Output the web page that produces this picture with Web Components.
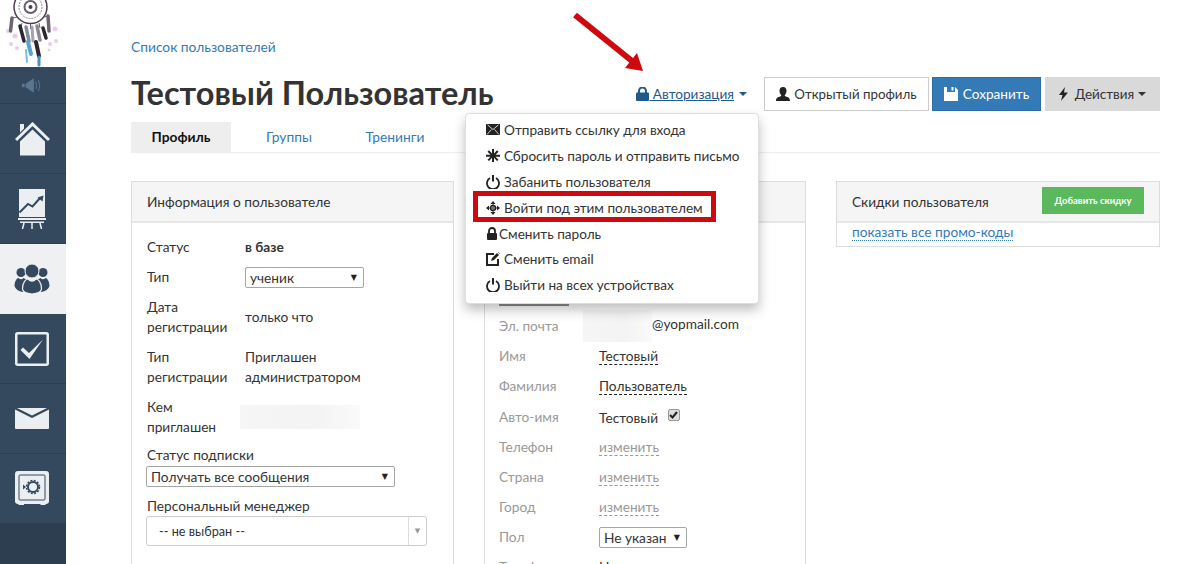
<!DOCTYPE html>
<html lang="ru">
<head>
<meta charset="utf-8">
<title>Тестовый Пользователь</title>
<style>
    html, body { margin: 0; height: 100%; overflow: hidden; background: #fff; }
    body { font: 13.7px/20px Lato, "Open Sans", sans-serif; color: #333; }
</style>
</head>
<body>
<app-shell>
    <side-nav slot="nav"></side-nav>
    <page-head></page-head>
    <page-tabs></page-tabs>
    <div style="display:grid;grid-template-columns:323px 322px 324px;column-gap:30px;margin-top:28px;align-items:start">
        <info-panel title="Информация о пользователе" style="--body-top:9px;--body-left:14px">
            <kv-row label="Статус"><b>в базе</b></kv-row>
            <kv-row label="Тип"><fake-select width="119px" h="21px">ученик</fake-select></kv-row>
            <kv-row label="Дата регистрации" style="--row-h:50px">только что</kv-row>
            <kv-row label="Тип регистрации" style="--row-h:50px">Приглашен администратором</kv-row>
            <kv-row label="Кем приглашен" style="--row-h:50px"><blur-box width="120px" h="24px" style="margin-left:-5px"></blur-box></kv-row>
            <kv-stack label="Статус подписки"><fake-select width="249px" h="21px">Получать все сообщения</fake-select></kv-stack>
            <kv-stack label="Персональный менеджер"><combo-box>-- не выбран --</combo-box></kv-stack>
        </info-panel>
        <info-panel style="--body-top:81px;--body-left:14px">
            <div style="width:70px;height:2px;background:#8c8c8c;margin-bottom:5px"></div>
            <kv-row muted label="Эл. почта"><blur-box width="69px" h="32px" style="margin-left:-16px"></blur-box>@yopmail.com</kv-row>
            <kv-row muted label="Имя"><edit-link strong>Тестовый</edit-link></kv-row>
            <kv-row muted label="Фамилия"><edit-link strong>Пользователь</edit-link></kv-row>
            <kv-row muted label="Авто-имя" style="--row-h:31px;--v-top:2px">Тестовый <fake-check></fake-check></kv-row>
            <kv-row muted label="Телефон"><edit-link>изменить</edit-link></kv-row>
            <kv-row muted label="Страна"><edit-link>изменить</edit-link></kv-row>
            <kv-row muted label="Город"><edit-link>изменить</edit-link></kv-row>
            <kv-row muted label="Пол"><fake-select width="88px" h="21px">Не указан</fake-select></kv-row>
            <kv-row muted label="Тариф">Нет</kv-row>
        </info-panel>
        <discount-panel></discount-panel>
    </div>
    <auth-menu slot="over"></auth-menu>
    <red-marks slot="over"></red-marks>
</app-shell>

<script>
const FONT = 'Lato, "Open Sans", sans-serif';

class AppShell extends HTMLElement {
    constructor() {
        super();
        this.attachShadow({ mode: "open" });
        this.shadowRoot.innerHTML = `
            <style>
                :host { display: flex; width: 1199px; height: 564px; overflow: hidden; position: relative; }
                .main { flex: 1; min-width: 0; padding: 37px 39px 0 65px; }
            </style>
            <slot name="nav"></slot>
            <div class="main"><slot></slot></div>
            <slot name="over"></slot>`;
    }
}

const NAV_ICONS = {
    home: `<svg width="35" height="34" viewBox="0 0 35 34"><path d="M1 18 17.500 2 34 18" fill="none" stroke="#eceff1" stroke-width="3"/><path d="M5 2h4v4.500l-4 4zM5 19.500 17.500 7.500 30 19.500V33.500H5z" fill="#eceff1"/></svg>`,
    chart: `<svg width="28" height="40" viewBox="0 0 28 40"><path d="M1 0h26v28H1z" fill="#eceff1"/><path d="M1.500 23.500l8.500-8.500 4.500 2.500 8-9" fill="none" stroke="#34495e" stroke-width="2"/><path d="M19.500 8.500l6-2-1 6z" fill="#34495e"/><path d="M0 29h28v2H0zM2 32.500h24V34H2z" fill="#eceff1"/><path d="M6 34l-1.500 6M14 34v6M22 34l1.500 6" stroke="#eceff1" stroke-width="1.500"/></svg>`,
    people: `<svg width="36" height="30" viewBox="0 0 36 30"><circle cx="7" cy="8.500" r="4.500" fill="#34495e"/><circle cx="29" cy="8.500" r="4.500" fill="#34495e"/><path d="M.5 22C.5 17 3 14 4.500 14Q7 16.500 9.500 14L13 16 9 28Q2 27 .5 22z" fill="#34495e"/><path d="M35.500 22C35.500 17 33 14 31.500 14Q29 16.500 26.500 14L23 16 27 28Q34 27 35.500 22z" fill="#34495e"/><circle cx="18" cy="7" r="7" fill="#34495e" stroke="#eff0f1" stroke-width="1"/><path d="M8.500 25C8.500 18 12 15 14 15Q18 19 22 15C24 15 27.500 18 27.500 25Q27 29 18 30Q9 29 8.500 25z" fill="#34495e" stroke="#eff0f1" stroke-width="1.200"/></svg>`,
    check: `<svg width="34" height="34" viewBox="0 0 34 34"><rect x="1.250" y="1.250" width="31.500" height="31.500" rx="1.500" fill="none" stroke="#eceff1" stroke-width="2.500"/><path d="M5.500 18 8 15.500 14 21 28 7.500 14.500 27z" fill="#eceff1"/></svg>`,
    mail: `<svg width="34" height="21" viewBox="0 0 34 21"><path d="M0 1.500v18.500a1 1 0 0 0 1 1h32a1 1 0 0 0 1-1V1.500L17 10z" fill="#eceff1"/><path d="M2 0h30L17 7.500z" fill="#eceff1"/></svg>`,
    safe: `<svg width="34" height="35" viewBox="0 0 34 35"><rect x="1" y="1" width="32" height="31" rx="2" fill="#eceff1" stroke="#eceff1" stroke-width="2"/><rect x="4" y="4" width="26" height="25" rx="1" fill="#eceff1" stroke="#34495e" stroke-width="1"/><path d="M3 33h6v1H4zM25 33h6l-1 1h-4z" fill="#eceff1"/><circle cx="18" cy="16" r="5" fill="none" stroke="#34495e" stroke-width="2"/><circle cx="18" cy="16" r="6.500" fill="none" stroke="#34495e" stroke-width="1.500" stroke-dasharray="2 1.400"/><path d="M8 13.500l3 2.500-3 2.500z" fill="#34495e"/></svg>`
};

class SideNav extends HTMLElement {
    constructor() {
        super();
        this.attachShadow({ mode: "open" });
        const item = (name, extra = "") => `<div class="item ${extra}">${NAV_ICONS[name]}</div>`;
        this.shadowRoot.innerHTML = `
            <style>
                :host { display: flex; flex-direction: column; width: 66px; height: 564px; flex: none; }
                .logo { height: 67px; background: #fff; overflow: hidden; }
                .logo svg { display: block; filter: blur(.5px); }
                .mute { height: 37px; background: #34495e; border-bottom: 1px solid #2c3e50; box-sizing: border-box; display: flex; align-items: center; justify-content: center; padding-right: 2px; }
                .item { height: 70px; box-sizing: border-box; background: #34495e; border-bottom: 1px solid #2c3e50; display: flex; align-items: center; justify-content: center; padding-right: 2px; }
                .active { background: #eff0f1; border-bottom: 0; padding-right: 3px; }
                .rest { flex: 1; background: #2d3e50; }
            </style>
            <div class="logo">
                <svg width="66" height="67" viewBox="0 0 66 67">
                    <g fill="#e0bcea" opacity=".75">
                        <circle cx="8" cy="31" r="2"/><circle cx="11" cy="44" r="2"/><circle cx="55" cy="29" r="2.500"/><circle cx="56" cy="41" r="2"/><circle cx="17" cy="48" r="2"/><circle cx="49" cy="50" r="1.500"/><circle cx="15" cy="36" r="2.500"/><circle cx="50" cy="44" r="2"/>
                    </g>
                    <circle cx="30.500" cy="7" r="16.500" fill="none" stroke="#4c3c50" stroke-width="1.500"/>
                    <circle cx="30.500" cy="7" r="11.500" fill="none" stroke="#8a7f90" stroke-width="1" stroke-dasharray="2 1"/>
                    <circle cx="30.500" cy="7" r="6" fill="none" stroke="#6a5c70" stroke-width="2"/>
                    <circle cx="30.500" cy="7" r="2" fill="#4c3c50"/>
                    <path d="M17 17l-4 1M44 17l4-1M22 23l-1 4M30.500 24v5M39 23l1 5" stroke="#6a5c70" fill="none"/>
                    <g stroke-linecap="round" fill="none">
                        <path d="M12 18l-1.500 13" stroke="#6d6470" stroke-width="3.500"/>
                        <path d="M48 16l1 15" stroke="#6d6470" stroke-width="3.500"/>
                        <path d="M20 26l4 15" stroke="#2c2630" stroke-width="3.500"/>
                        <path d="M26 27l3 14" stroke="#7d8da0" stroke-width="3.500"/>
                        <path d="M32 27l1 14" stroke="#a8a2ae" stroke-width="3"/>
                        <path d="M37 26l3 14" stroke="#8d8792" stroke-width="3.500"/>
                        <path d="M43 28l3 10" stroke="#2c2630" stroke-width="3.500"/>
                        <path d="M28 42l3 12" stroke="#5aa5cf" stroke-width="4"/>
                        <path d="M36 42l3 14" stroke="#2c2630" stroke-width="4"/>
                        <path d="M26 50l1 12" stroke="#74bfe2" stroke-width="2"/>
                        <path d="M39 57v8" stroke="#4a90c0" stroke-width="3"/>
                    </g>
                </svg>
            </div>
            <div class="mute">
                <svg width="22" height="15" viewBox="0 0 24 16"><path d="M1 6h3v4H1zM5 6l9-6v16l-9-6z" fill="#5b7690"/><path d="M16 4q2 4 0 8M19 2q3 6 0 12" fill="none" stroke="#5b7690"/></svg>
            </div>
            ${item("home")}${item("chart")}${item("people", "active")}${item("check")}${item("mail")}${item("safe")}
            <div class="rest"></div>`;
    }
}

class PageHead extends HTMLElement {
    constructor() {
        super();
        this.attachShadow({ mode: "open" });
        this.shadowRoot.innerHTML = `
            <style>
                :host { display: block; font-family: ${FONT}; font-size: 13.600px; }
                a { color: #337ab7; text-decoration: none; line-height: 20px; display: block; font-size: 13.800px; }
                .bar { display: flex; align-items: center; margin-top: 20px; height: 34px; }
                h1 { margin: 0; flex: 1; font-size: 32.500px; font-weight: 700; line-height: 34px; color: #333; position: relative; top: -1px; }
                .auth { color: #1f5a8c; display: flex; align-items: center; margin-right: 17px; }
                .caret { width: 0; height: 0; border: 4px solid transparent; border-top-color: currentColor; border-bottom: 0; margin-left: 5px; }
                .btn { height: 34px; box-sizing: border-box; display: flex; align-items: center; justify-content: center; }
                .btn svg { margin-right: 4px; }
                .open { width: 165px; border: 1px solid #ccc; color: #333; background: #fff; font-size: 13.300px; }
                .save { width: 109px; margin-left: 3px; background: #337ab7; color: #fff; border: 1px solid #2e6da4; }
                .save svg { margin-right: 5px; }
                .acts { width: 115px; margin-left: 4px; background: #d9d9d9; color: #333; font-size: 13.500px; }
                .acts svg { margin-right: 7px; }
                .acts .caret { margin-left: 4px; }
            </style>
            <a>Список пользователей</a>
            <div class="bar">
                <h1>Тестовый Пользователь</h1>
                <div class="auth">
                    <svg width="13" height="14" viewBox="0 0 13 14"><path d="M3 6V4a3.500 3.500 0 0 1 7 0v2" fill="none" stroke="currentColor" stroke-width="2"/><rect y="5.500" width="13" height="8.500" rx="1" fill="currentColor"/></svg>
                    <u>&nbsp;Авторизация</u><span class="caret"></span>
                </div>
                <div class="btn open">
                    <svg width="14" height="14" viewBox="0 0 14 14"><path d="M7 0c2.300 0 3.500 1.600 3.500 4 0 1.700-.8 3.200-1.600 4-.3.800 0 1.300 1 1.600 2 .6 4.100 1.300 4.100 4.400H0c0-3.100 2.100-3.800 4.100-4.400 1-.3 1.300-.8 1-1.600C4.300 7.200 3.500 5.700 3.500 4 3.500 1.600 4.700 0 7 0z" fill="#222"/></svg>
                    Открытый профиль
                </div>
                <div class="btn save">
                    <svg width="14" height="14" viewBox="0 0 14 14"><path d="M0 0h3v5h8V0l3 3v11H0zM7.500 0h2v3.500h-2z" fill="#fff"/></svg>
                    Сохранить
                </div>
                <div class="btn acts">
                    <svg width="9" height="14" viewBox="0 0 9 14"><path d="M6 0L0 8h3.500L2 14l7-8.500H5z" fill="#222"/></svg>
                    Действия<span class="caret"></span>
                </div>
            </div>`;
    }
}

class PageTabs extends HTMLElement {
    constructor() {
        super();
        this.attachShadow({ mode: "open" });
        this.shadowRoot.innerHTML = `
            <style>
                :host { display: flex; font-family: ${FONT}; font-size: 13.800px; margin-top: 11px; height: 31px; border-bottom: 1px solid #eee; box-sizing: border-box; }
                div { height: 30px; display: flex; align-items: center; justify-content: center; color: #337ab7; }
                .on { width: 100px; background: #eee; color: #111; font-weight: 700; }
                .a { width: 116px; } .b { width: 96px; }
            </style>
            <div class="on">Профиль</div><div class="a">Группы</div><div class="b">Тренинги</div>`;
    }
}

class InfoPanel extends HTMLElement {
    constructor() {
        super();
        this.attachShadow({ mode: "open" });
        this.shadowRoot.innerHTML = `
            <style>
                :host { display: block; height: 420px; box-sizing: border-box; border: 1px solid #ddd; border-bottom: 0; font-family: ${FONT}; font-size: 13.700px; }
                header { height: 41px; box-sizing: border-box; background: #f5f5f5; border-bottom: 2px solid #e6e6e6; padding: 0 15px; display: flex; align-items: center; color: #333; }
                .body { padding: var(--body-top, 10px) 15px 0 var(--body-left, 15px); display: flex; flex-direction: column; }
            </style>
            <header id="t"></header>
            <div class="body"><slot></slot></div>`;
    }
    connectedCallback() {
        this.shadowRoot.getElementById("t").textContent = this.getAttribute("title") ?? "";
        this.removeAttribute("title");
    }
}

class KvRow extends HTMLElement {
    constructor() {
        super();
        this.attachShadow({ mode: "open" });
    }
    connectedCallback() {
        const muted = this.hasAttribute("muted");
        this.shadowRoot.innerHTML = `
            <style>
                :host { display: flex; align-items: center; height: var(--row-h, 30px); line-height: 20px; }
                .k { width: ${muted ? 100 : 99}px; flex: none; color: ${muted ? "#999" : "#333"}; padding: 0 14px 0 ${muted ? 0 : 1}px; box-sizing: border-box; }
                .v { flex: 1; min-width: 0; max-width: 150px; padding-top: var(--v-top, 0); }
                :host([muted]) .v { max-width: none; }
            </style>
            <div class="k">${this.getAttribute("label")}</div>
            <div class="v"><slot></slot></div>`;
    }
}

class KvStack extends HTMLElement {
    constructor() {
        super();
        this.attachShadow({ mode: "open" });
    }
    connectedCallback() {
        this.shadowRoot.innerHTML = `
            <style>
                :host { display: block; margin-top: 3px; margin-bottom: 6px; line-height: 20px; }
                .k { color: #333; height: 20px; padding-left: 1px; }
            </style>
            <div class="k">${this.getAttribute("label")}</div>
            <slot></slot>`;
    }
}

class FakeSelect extends HTMLElement {
    constructor() {
        super();
        this.attachShadow({ mode: "open" });
    }
    connectedCallback() {
        this.shadowRoot.innerHTML = `
            <style>
                :host { display: inline-flex; align-items: center; justify-content: space-between; vertical-align: middle;
                        width: ${this.getAttribute("width")}; height: ${this.getAttribute("h")}; box-sizing: border-box;
                        border: 1px solid #a6a6a6; border-radius: 2px; padding: 0 6px 0 4px; background: #fff; color: #333; }
                i { font: normal 8px "DejaVu Sans", sans-serif; color: #222; }
            </style>
            <span><slot></slot></span><i>▼</i>`;
    }
}

class ComboBox extends HTMLElement {
    constructor() {
        super();
        this.attachShadow({ mode: "open" });
        this.shadowRoot.innerHTML = `
            <style>
                :host { display: flex; height: 30px; width: 281px; box-sizing: border-box; border: 1px solid #ccc; border-radius: 3px; align-items: center; font-size: 12.700px; color: #333; }
                span { flex: 1; padding-left: 12px; }
                i { width: 17px; height: 28px; border-left: 1px solid #ddd; display: flex; align-items: center; justify-content: center; font: normal 7px "DejaVu Sans", sans-serif; color: #999; }
            </style>
            <span><slot></slot></span><i>▼</i>`;
    }
}

class BlurBox extends HTMLElement {
    constructor() {
        super();
        this.attachShadow({ mode: "open" });
    }
    connectedCallback() {
        this.shadowRoot.innerHTML = `
            <style>
                :host { display: inline-block; vertical-align: middle; width: ${this.getAttribute("width")}; height: ${this.getAttribute("h")};
                        background: linear-gradient(90deg, #f6f6f6, #f3f3f3 60%, #fafafa); }
            </style>`;
    }
}

class EditLink extends HTMLElement {
    constructor() {
        super();
        this.attachShadow({ mode: "open" });
    }
    connectedCallback() {
        const strong = this.hasAttribute("strong");
        this.shadowRoot.innerHTML = `
            <style>
                :host { display: inline-block; line-height: 17px; color: ${strong ? "#333" : "#999"}; border-bottom: 1px dashed ${strong ? "#222" : "#999"}; }
            </style><slot></slot>`;
    }
}

class FakeCheck extends HTMLElement {
    constructor() {
        super();
        this.attachShadow({ mode: "open" });
        this.shadowRoot.innerHTML = `
            <style>
                :host { display: inline-flex; width: 12px; height: 12px; box-sizing: border-box; border: 1px solid #999; border-radius: 2px; background: #ddd; vertical-align: 4px; margin-left: 6px; align-items: center; justify-content: center; }
            </style>
            <svg width="9" height="8" viewBox="0 0 9 8"><path d="M1 4l2.500 2.500L8 1" fill="none" stroke="#222" stroke-width="2"/></svg>`;
    }
}

class DiscountPanel extends HTMLElement {
    constructor() {
        super();
        this.attachShadow({ mode: "open" });
        this.shadowRoot.innerHTML = `
            <style>
                :host { display: block; border: 1px solid #ddd; font-family: ${FONT}; font-size: 13.700px; }
                header { height: 41px; box-sizing: border-box; background: #f5f5f5; border-bottom: 2px solid #e6e6e6; padding: 0 15px; display: flex; align-items: center; justify-content: space-between; color: #333; }
                button { all: unset; width: 102px; height: 27px; background: #5cb85c; color: #fff; font-size: 9.500px; font-weight: 700; text-align: center; line-height: 25px; position: relative; top: -1px; }
                .b { height: 24px; padding: 0 15px; box-sizing: border-box; margin-top: -1px; }
                a { color: #337ab7; border-bottom: 1px dotted #337ab7; line-height: 17px; display: inline-block; }
            </style>
            <header>Скидки пользователя<button>Добавить скидку</button></header>
            <div class="b"><a>показать все промо-коды</a></div>`;
    }
}

class AuthMenu extends HTMLElement {
    constructor() {
        super();
        this.attachShadow({ mode: "open" });
        const ic = {
            mail: `<path d="M0 1h14v11H0z" fill="#222"/><path d="M1.500 1.800L7 6.500l5.500-4.700M1 11.500l4.500-5M13 11.500L8.500 6.500" fill="none" stroke="#fff" stroke-width=".8"/>`,
            star: `<path d="M6 0h2v4.500l3-3.200 1.500 1.400-3 3H14v2H9.500l3 3L11 12l-3-3.200V13H6V8.800L3 12l-1.500-1.300 3-3H0v-2h4.500l-3-3L3 1.300l3 3.200z" fill="#222"/>`,
            power: `<path d="M4 3a6 6 0 1 0 6 0" fill="none" stroke="#222" stroke-width="1.800"/><path d="M7 0v6.500" stroke="#222" stroke-width="2"/>`,
            move: `<path d="M7 0l2.500 3h-5zM7 14l-2.500-3h5zM0 7l3-2.500v5zM14 7l-3 2.500v-5z" fill="#222"/><circle cx="7" cy="7" r="2.500" fill="none" stroke="#222" stroke-width="1.500"/><path d="M3 7h8M7 3v8" stroke="#222" stroke-width=".8"/>`,
            lock: `<path d="M3 6V4a3 3 0 0 1 6 0v2" fill="none" stroke="#222" stroke-width="1.800"/><rect x="1" y="6" width="10" height="7" rx="1" fill="#222"/>`,
            edit: `<path d="M8 2H1v11h11V7" fill="none" stroke="#222" stroke-width="2"/><path d="M5 9l1-3 5-5 2 2-5 5z" fill="#222"/><path d="M12.500 .5l1 1" stroke="#222"/>`
        };
        const row = (icon, text, cls = "") => `<li class="${cls}"><svg width="${icon === "lock" ? 12 : 14}" height="14" viewBox="0 0 ${icon === "lock" ? 12 : 14} 14">${ic[icon]}</svg><span>${text}</span></li>`;
        this.shadowRoot.innerHTML = `
            <style>
                :host { position: absolute; left: 465px; top: 113px; width: 294px; height: 191px; box-sizing: border-box; background: #fff; border: 1px solid #ddd; border-radius: 4px; box-shadow: 0 6px 12px rgba(0,0,0,.25); font-family: ${FONT}; font-size: 13.600px; color: #333; }
                ul { list-style: none; margin: 3.500px 0 0; padding: 0 0 0 20px; }
                li { display: flex; align-items: center; height: 25.800px; gap: 4px; white-space: nowrap; }
                li.tight { gap: 1px; }
            </style>
            <ul>
                ${row("mail", "Отправить ссылку для входа")}
                ${row("star", "Сбросить пароль и отправить письмо")}
                ${row("power", "Забанить пользователя")}
                ${row("move", "Войти под этим пользователем")}
                ${row("lock", "Сменить пароль", "tight")}
                ${row("edit", "Сменить email")}
                ${row("power", "Выйти на всех устройствах")}
            </ul>`;
    }
}

class RedMarks extends HTMLElement {
    constructor() {
        super();
        this.attachShadow({ mode: "open" });
        this.shadowRoot.innerHTML = `
            <style>
                :host { position: absolute; inset: 0; pointer-events: none; }
                .box { position: absolute; left: 473px; top: 191px; width: 243px; height: 31px; box-sizing: border-box; border: 5px solid #cd0a0f; }
                svg { position: absolute; left: 0; top: 0; }
            </style>
            <div class="box"></div>
            <svg width="1199" height="564"><path d="M575 15L632 61" stroke="#cd0a0f" stroke-width="6" fill="none"/><path d="M643 71L625 68 637 53z" fill="#cd0a0f"/></svg>`;
    }
}

customElements.define("app-shell", AppShell);
customElements.define("side-nav", SideNav);
customElements.define("page-head", PageHead);
customElements.define("page-tabs", PageTabs);
customElements.define("info-panel", InfoPanel);
customElements.define("kv-row", KvRow);
customElements.define("kv-stack", KvStack);
customElements.define("fake-select", FakeSelect);
customElements.define("combo-box", ComboBox);
customElements.define("blur-box", BlurBox);
customElements.define("edit-link", EditLink);
customElements.define("fake-check", FakeCheck);
customElements.define("discount-panel", DiscountPanel);
customElements.define("auth-menu", AuthMenu);
customElements.define("red-marks", RedMarks);
</script>
</body>
</html>
